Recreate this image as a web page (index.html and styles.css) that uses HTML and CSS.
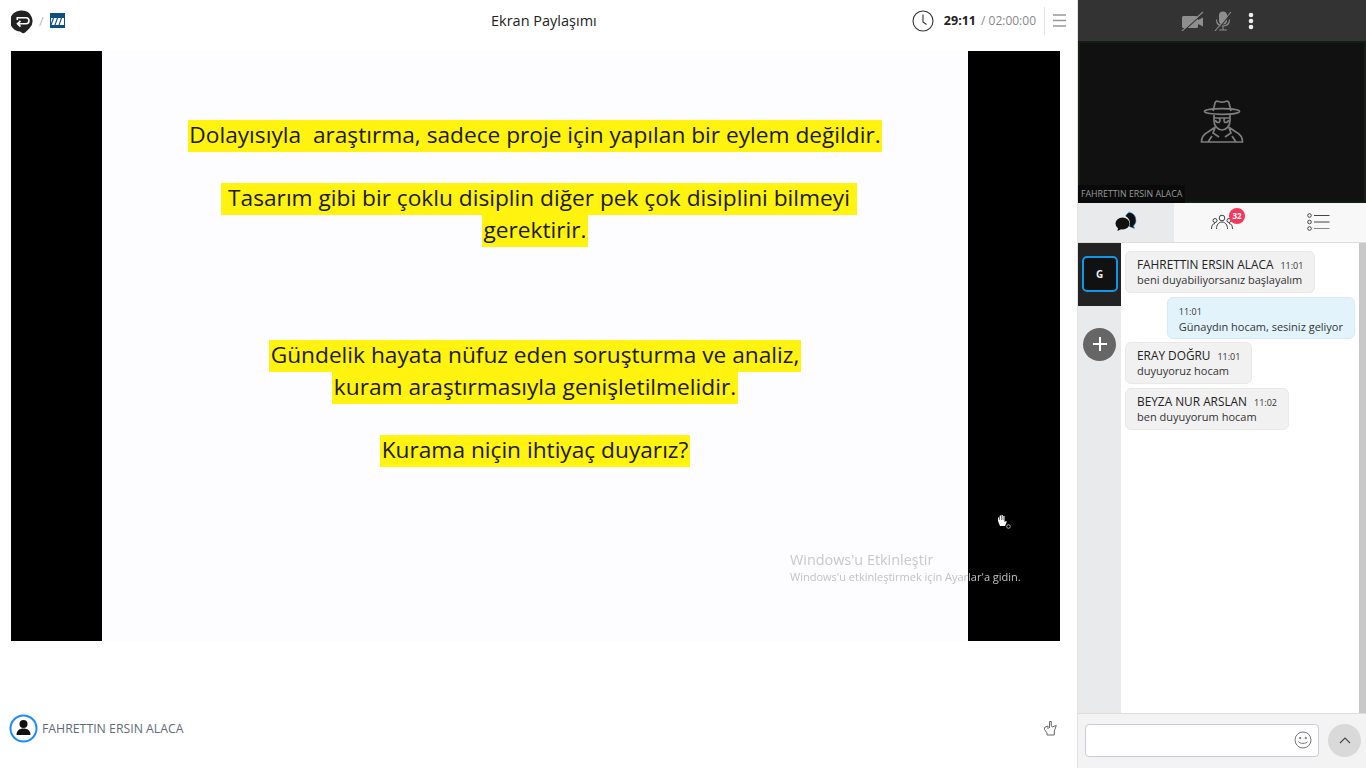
FILE: index.html
```html
<!DOCTYPE html>
<html lang="en">
<head>
    <meta charset="UTF-8">
    <meta name="viewport" content="width=device-width, initial-scale=1.0">
    <title>Ekran Paylaşımı</title>
    <link rel="stylesheet" href="styles.css">
</head>
<body>

    <div class="main">
        <!-- Top bar -->
        <div class="topbar">
            <div class="crumbs">
                <svg class="back-icon" width="22" height="24" viewBox="0 0 22 24">
                    <path d="M11 0.500a10.500 10.500 0 0 1 7.500 17.800l-1 .9-2.800 2.900a3 3 0 0 1-3.400 .8l-2.300-1.300a10.500 10.500 0 0 1 1.500-21.100z" fill="#222"/>
                    <path d="M6.300 10V7.700H15a3 3 0 0 1 0 6H7M9.500 10.800L6.500 13.700l3 2.900" fill="none" stroke="#fff" stroke-width="1.600"/>
                </svg>
                <span class="slash">/</span>
                <svg class="logo" width="15" height="15" viewBox="0 0 15 15">
                    <rect width="15" height="15" fill="#0d4f80"/>
                    <rect x="1" y="5" width="13" height="7" fill="#fff"/>
                    <path d="M1 12l2.500-7M5 12l2.500-7M9 12l2.500-7" stroke="#0d4f80" stroke-width="1.100"/>
                </svg>
            </div>
            <div class="title">Ekran Paylaşımı</div>
            <div class="timer">
                <svg width="22" height="22" viewBox="0 0 22 22" fill="none" stroke="#333">
                    <circle cx="11" cy="11" r="10" stroke-width="1.100"/>
                    <path d="M11 4.500V12l3.500 2.500" stroke-width="1.100"/>
                </svg>
                <span class="time-now">29:11</span>
                <span class="time-total">/ 02:00:00</span>
                <span class="divider"></span>
                <svg class="menu-icon" width="13" height="13" viewBox="0 0 13 13" stroke="#999" stroke-width="1.300">
                    <path d="M0 1h13M0 6.500h13M0 12h13"/>
                </svg>
            </div>
        </div>

        <!-- Shared screen -->
        <div class="stage">
            <div class="slide">
                <p class="para first"><span class="mark">Dolayısıyla&nbsp; araştırma, sadece proje için yapılan bir eylem değildir.</span></p>
                <p class="para second"><span class="mark shifted">&nbsp;Tasarım gibi bir çoklu disiplin diğer pek çok disiplini bilmeyi&nbsp;</span><br><span class="mark">gerektirir.</span></p>
                <p class="para third"><span class="mark">Gündelik hayata nüfuz eden soruşturma ve analiz,</span><br><span class="mark">kuram araştırmasıyla genişletilmelidir.</span></p>
                <p class="para fourth"><span class="mark">Kurama niçin ihtiyaç duyarız?</span></p>
            </div>
            <div class="watermark">
                <div class="wm-title">Windows'u Etkinleştir</div>
                <div class="wm-text">Windows'u etkinleştirmek için Ayarlar'a gidin.</div>
            </div>
            <svg class="hand" width="18" height="16" viewBox="0 0 18 16">
                <path d="M3 7V3.500h1.200V6h.5V1.500H6V6h.5V1h1.300v5h.5V2h1.200v6l1.500-1 .8.8L10 12H5z" fill="#fff"/>
                <circle cx="13.500" cy="12.500" r="1.800" fill="none" stroke="#aaa"/>
            </svg>
        </div>

        <!-- Presenter -->
        <div class="presenter">
            <div class="presenter-left">
                <svg width="29" height="29" viewBox="0 0 29 29">
                    <circle cx="14.500" cy="14.500" r="13" fill="#fff" stroke="#1a8cff" stroke-width="2"/>
                    <circle cx="14.500" cy="10" r="4" fill="#111"/>
                    <path d="M7.500 21c0-4.500 3-6.500 7-6.500s7 2 7 6.500z" fill="#111"/>
                </svg>
                <span class="presenter-name">FAHRETTIN ERSIN ALACA</span>
            </div>
            <svg class="thumb" width="15" height="17" viewBox="0 0 15 17" fill="none" stroke="#666" stroke-width="1">
                <path d="M6.500 8V1.500h1.800V6l1 1 4-1.500-2 5.500v4H4v-2L1.500 9.500V7.500L5 6v3"/>
            </svg>
        </div>
    </div>

    <div class="side">
        <!-- Controls -->
        <div class="controls">
            <svg class="cam-off" width="24" height="20" viewBox="0 0 24 20">
                <rect x="1" y="5" width="16" height="12" rx="1.500" fill="#8e8e8e"/>
                <path d="M17 9l5-2.500v9L17 13z" fill="#8e8e8e"/>
                <path d="M2.500 20L23.500 1" stroke="#333" stroke-width="1.200"/>
                <path d="M1 20L22 1" stroke="#8e8e8e" stroke-width="1.100"/>
            </svg>
            <svg class="mic-off" width="18" height="20" viewBox="0 0 18 20" fill="none">
                <rect x="5" y="0.500" width="8" height="13" rx="4" fill="#8e8e8e"/>
                <path d="M2.500 8.500c0 4 2.500 6.500 6.500 6.500s6.500-2.500 6.500-6.500M9 15v4M5 19h8" stroke="#8e8e8e" stroke-width="1.100"/>
                <path d="M2.500 20L18.500 1" stroke="#333" stroke-width="1.200"/>
                <path d="M1 20L17 1" stroke="#8e8e8e" stroke-width="1.100"/>
            </svg>
            <svg class="more" width="6" height="18" viewBox="0 0 6 18" fill="#eee">
                <circle cx="3" cy="3" r="2.300"/>
                <circle cx="3" cy="9" r="2.300"/>
                <circle cx="3" cy="15" r="2.300"/>
            </svg>
        </div>

        <!-- Camera -->
        <div class="camera">
            <svg class="spy" width="44" height="44" viewBox="0 0 44 44" fill="none" stroke="#7d7d7d" stroke-width="1.700">
                <path d="M13 12l2-8c.5-2 2-2 3.500-1.500 2 .8 5 .8 7 0C27 2 28.500 2 29 4l2 8"/>
                <ellipse cx="22" cy="12.500" rx="17.500" ry="2.800"/>
                <path d="M14 16v6c0 5 4 9 8 9s8-4 8-9v-6"/>
                <path d="M14 19h16M19 19a3 3 0 0 1 0 4.500c-2 0-3.500-1-3.500-2.500M25 19a3 3 0 0 0 0 4.500c2 0 3.500-1 3.500-2.500"/>
                <path d="M15.500 28L8 33c-4 2-6.500 5-6.500 10h41c0-5-2.500-8-6.500-10l-7.500-5M15 29l-2 5 6 4M29 29l2 5-6 4M8 43l4-6M36 43l-4-6"/>
            </svg>
            <div class="camera-name">FAHRETTIN ERSIN ALACA</div>
        </div>

        <!-- Tabs -->
        <div class="tabs">
            <div class="tab active">
                <svg width="24" height="21" viewBox="0 0 24 21">
                    <path d="M14.500 1.200a8 8 0 0 1 5 13.800l1 2.500-4-1.500a8 8 0 0 1-1-14.800z" fill="#111" stroke="#3a9ad9" stroke-width=".6"/>
                    <circle cx="8.500" cy="12" r="7.500" fill="#e9eaec"/>
                    <ellipse cx="8.500" cy="12.500" rx="7" ry="6" fill="#111"/>
                    <path d="M4 16.500l-.5 3.500 4-2z" fill="#111"/>
                </svg>
            </div>
            <div class="tab">
                <svg width="22" height="16" viewBox="0 0 22 16" fill="none" stroke="#444" stroke-width="1">
                    <circle cx="11" cy="4" r="2.800"/>
                    <path d="M5.500 15c0-4 2-7 5.500-7s5.500 3 5.500 7"/>
                    <circle cx="4" cy="6.500" r="2"/>
                    <path d="M.5 15c0-3 1-5.500 3.500-5.500"/>
                    <circle cx="18" cy="6.500" r="2"/>
                    <path d="M21.500 15c0-3-1-5.500-3.500-5.500"/>
                </svg>
                <span class="badge">32</span>
            </div>
            <div class="tab">
                <svg width="23" height="18" viewBox="0 0 23 18" fill="none" stroke="#444">
                    <circle cx="2.500" cy="2.500" r="1.800"/>
                    <circle cx="2.500" cy="9" r="1.800"/>
                    <circle cx="2.500" cy="15.500" r="1.800"/>
                    <path d="M7 2.500h15.500M7 9h15.500"/>
                    <path d="M7 15.500h15.500" stroke="#888"/>
                </svg>
            </div>
        </div>

        <!-- Chat -->
        <div class="chat">
            <div class="rail">
                <div class="rail-top">
                    <div class="room">G</div>
                </div>
                <div class="add">
                    <svg width="14" height="14" viewBox="0 0 14 14" stroke="#fff" stroke-width="2">
                        <path d="M7 0v14M0 7h14"/>
                    </svg>
                </div>
            </div>
            <div class="messages">
                <div class="msg">
                    <div class="row"><span class="sender">FAHRETTIN ERSIN ALACA</span><span class="stamp">11:01</span></div>
                    <div class="row">beni duyabiliyorsanız başlayalım</div>
                </div>
                <div class="msg mine">
                    <div class="row stamp-own">11:01</div>
                    <div class="row">Günaydın hocam, sesiniz geliyor</div>
                </div>
                <div class="msg">
                    <div class="row"><span class="sender">ERAY DOĞRU</span><span class="stamp">11:01</span></div>
                    <div class="row">duyuyoruz hocam</div>
                </div>
                <div class="msg">
                    <div class="row"><span class="sender">BEYZA NUR ARSLAN</span><span class="stamp">11:02</span></div>
                    <div class="row">ben duyuyorum hocam</div>
                </div>
            </div>
            <div class="scrollbar"></div>
        </div>

        <!-- Message input -->
        <div class="composer">
            <div class="input">
                <svg width="18" height="18" viewBox="0 0 18 18" fill="none" stroke="#777">
                    <circle cx="9" cy="9" r="8"/>
                    <circle cx="6.200" cy="7" r=".7" fill="#777"/>
                    <circle cx="11.800" cy="7" r=".7" fill="#777"/>
                    <path d="M4.500 10.500c1 2.500 8 2.500 9 0"/>
                </svg>
            </div>
            <div class="send">
                <svg width="12" height="7" viewBox="0 0 12 7" fill="none" stroke="#445" stroke-width="1.100">
                    <path d="M1 6l5-5 5 5"/>
                </svg>
            </div>
        </div>
    </div>

</body>
</html>
```

FILE: styles.css
```css
/* Page */
body {
    margin: 0;
    height: 768px;
    overflow: hidden;
    display: flex;
    font-family: "Open Sans", sans-serif;
    background: #ffffff;
    color: #222;
}

/* Left column */
.main {
    width: 1077px;
    display: flex;
    flex-direction: column;
}

/* Top bar */
.topbar {
    height: 41px;
    display: grid;
    grid-template-columns: 480px auto 1fr;
    align-items: center;
    padding-left: 11px;
    padding-right: 11px;
}

.crumbs {
    display: flex;
    align-items: center;
}

.back-icon {
    margin-top: 2px;
}

.slash {
    width: 17px;
    text-align: center;
    font-size: 13px;
    color: #bbb;
}

.title {
    font-size: 14.500px;
    color: #222;
}

.timer {
    display: flex;
    align-items: center;
    justify-content: flex-end;
    font-size: 12px;
}

.time-now {
    margin-left: 10px;
    font-size: 12.500px;
    font-weight: 700;
    color: #222;
}

.time-total {
    margin-left: 5px;
    color: #888;
}

.divider {
    width: 1px;
    height: 28px;
    margin: 0 8px;
    background: #e2e2e2;
}

/* Shared screen */
.stage {
    position: relative;
    width: 1049px;
    height: 590px;
    margin-top: 10px;
    margin-left: 11px;
    background: #000;
    display: flex;
    justify-content: center;
}

.slide {
    width: 866px;
    background: #fdfcfe;
    font-family: "Open Sans", sans-serif;
    font-size: 22.700px;
    line-height: 32px;
    color: #1c1a10;
    text-align: center;
    overflow: hidden;
    margin-right: 1px;
}

.para {
    margin: 0;
}

.para.first {
    margin-top: 69px;
}

.para.second {
    margin-top: 31px;
}

.para.third {
    margin-top: 93px;
}

.para.fourth {
    margin-top: 31px;
}

.mark {
    display: inline-block;
    vertical-align: top;
    line-height: 30px;
    padding: 0 1.500px 2px;
    background: #fff30f;
    white-space: pre-wrap;
}

.mark.shifted {
    margin-left: 8px;
}

.watermark {
    position: absolute;
    left: 779px;
    top: 499px;
    font-family: "Open Sans", sans-serif;
    filter: blur(0.3px);
}

.wm-title {
    font-size: 14.400px;
    color: #c9c9c9;
}

.wm-text {
    font-size: 11px;
    color: #c2c2c2;
}

.hand {
    position: absolute;
    left: 984px;
    top: 463px;
}

/* Presenter */
.presenter {
    flex: 1;
    display: flex;
    align-items: center;
    justify-content: space-between;
    padding: 48px 19px 0 9px;
    box-sizing: border-box;
}

.presenter-left {
    display: flex;
    align-items: center;
    gap: 4px;
}

.presenter-name {
    font-size: 12.300px;
    color: #5f6b7a;
}

/* Right column */
.side {
    width: 289px;
    display: flex;
    flex-direction: column;
    border-left: 1px solid #e2e2e2;
    box-sizing: border-box;
}

.controls {
    height: 41px;
    background: #333;
    display: flex;
    align-items: center;
    justify-content: center;
    padding-right: 9px;
}

.mic-off {
    margin-left: 9px;
}

.more {
    margin-left: 16px;
}

.camera {
    position: relative;
    height: 162px;
    background: #111;
    border: 2px solid #122012;
    box-sizing: border-box;
    display: flex;
    align-items: center;
    justify-content: center;
}

.spy {
    margin-bottom: 3px;
}

.camera-name {
    position: absolute;
    left: -2px;
    bottom: -2px;
    padding: 0 3px;
    height: 18px;
    line-height: 18px;
    background: #0a0a0a;
    color: #9a9a9a;
    font-size: 8.800px;
}

/* Tabs */
.tabs {
    height: 40px;
    display: flex;
    background: #f8f8f8;
    border-bottom: 1px solid #ddd;
    box-sizing: border-box;
}

.tab {
    position: relative;
    flex: 1;
    display: flex;
    align-items: center;
    justify-content: center;
    padding-bottom: 2px;
}

.tab.active {
    background: #e9eaec;
}

.badge {
    position: absolute;
    left: 55px;
    top: 5px;
    width: 16px;
    height: 16px;
    border-radius: 50%;
    background: #f5365c;
    color: #fff;
    font-size: 8px;
    font-weight: 700;
    line-height: 16px;
    text-align: center;
}

/* Chat */
.chat {
    flex: 1;
    display: flex;
    min-height: 0;
    border-bottom: 1px solid #ddd;
}

.rail {
    width: 43px;
    background: #e9eaec;
    flex-shrink: 0;
}

.rail-top {
    height: 63px;
    background: #222;
    display: flex;
    justify-content: center;
    padding-top: 13px;
    box-sizing: border-box;
}

.room {
    width: 36px;
    height: 36px;
    box-sizing: border-box;
    border: 2px solid #0c97e8;
    border-radius: 5px;
    background: #111;
    color: #eee;
    font-size: 10px;
    font-weight: 700;
    line-height: 32px;
    text-align: center;
}

.add {
    width: 33px;
    height: 33px;
    margin: 22px 0 0 5px;
    padding-bottom: 2px;
    box-sizing: border-box;
    border-radius: 50%;
    background: #666;
    display: flex;
    align-items: center;
    justify-content: center;
}

.messages {
    flex: 1;
    display: flex;
    flex-direction: column;
    align-items: flex-start;
    gap: 3.500px;
    padding: 8px 4px 0 4px;
    font-size: 11px;
    line-height: 15px;
    color: #333;
}

.msg {
    box-sizing: border-box;
    height: 42px;
    padding: 5px 11px 0;
    background: #f1f1f1;
    border: 1px solid #e8e8e8;
    border-radius: 6px;
    white-space: nowrap;
}

.row {
    height: 15px;
}

.msg.mine {
    align-self: flex-end;
    padding-top: 6px;
    background: #e3f3fc;
    border-color: #d6e9f5;
}

.sender {
    font-size: 11.850px;
    color: #222;
}

.stamp {
    margin-left: 7px;
    font-size: 9px;
    color: #333;
}

.stamp-own {
    font-size: 9px;
}

.scrollbar {
    width: 7px;
    background: #c8c8c8;
    flex-shrink: 0;
}

/* Message input */
.composer {
    height: 54px;
    background: #f3f3f3;
    display: flex;
    align-items: center;
    gap: 9px;
    padding: 0 5px 2px 7px;
    box-sizing: border-box;
}

.input {
    width: 234px;
    height: 33px;
    box-sizing: border-box;
    background: #fff;
    border: 1px solid #c8ced8;
    border-radius: 4px;
    display: flex;
    align-items: center;
    justify-content: flex-end;
    padding-right: 6px;
}

.send {
    width: 33px;
    height: 33px;
    border-radius: 50%;
    background: #d9d9d9;
    display: flex;
    align-items: center;
    justify-content: center;
}
```
